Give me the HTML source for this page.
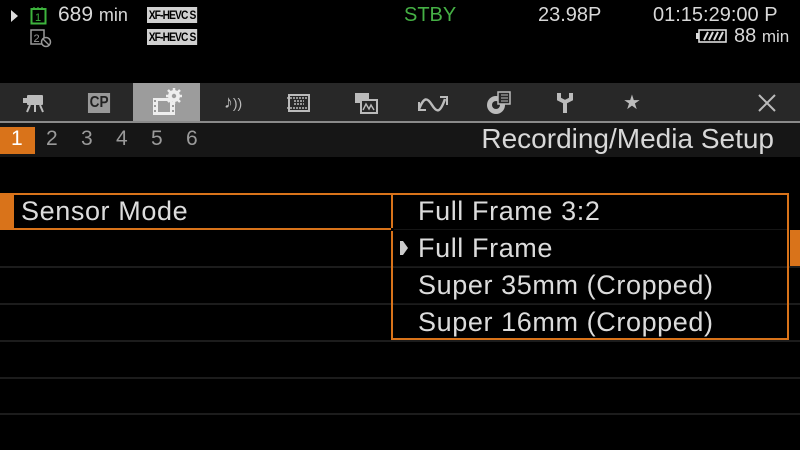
<!DOCTYPE html>
<html><head><meta charset="utf-8"><style>
*{margin:0;padding:0;box-sizing:border-box}
body{width:800px;height:450px;background:#000;overflow:hidden;position:relative;font-family:"Liberation Sans",sans-serif;color:#d8d8d8}
.a{position:absolute;white-space:nowrap}
.xf{position:absolute;background:#d0d0d0;color:#000;font-size:12px;font-weight:bold;letter-spacing:-1px;padding:0 2px;height:16px;line-height:16px;transform:scaleX(.85);transform-origin:left}
.line{position:absolute;left:0;width:800px;height:2px;background:#1c1c1c}
.it{position:absolute;font-size:27px;color:#dcdcdc;line-height:30px;letter-spacing:0.6px}
.tab{position:absolute;top:83px;height:39px;display:flex;align-items:center;justify-content:center;width:66px}
.pn{position:absolute;top:127px;font-size:21px;color:#9a9a9a}
</style></head><body>
<svg class="a" style="left:10px;top:9px" width="10" height="14"><polygon points="1,1 8,7 1,13" fill="#ddd"/></svg>
<svg class="a" style="left:30px;top:6px" width="18" height="19"><rect x="1.5" y="3" width="14" height="14.5" fill="none" stroke="#3db33d" stroke-width="2"/><path d="M4 1v3M8 1v3M12 1v3" stroke="#3db33d" stroke-width="1.2"/><text x="5" y="15" font-size="11" fill="#3db33d" font-family="Liberation Sans">1</text></svg>
<div class="a" style="left:58px;top:3px;font-size:21px;color:#d8d8d8">689 <span style="font-size:18px">min</span></div>
<div class="xf" style="left:147px;top:7px">XF-HEVC S</div>
<div class="xf" style="left:147px;top:29px">XF-HEVC S</div>
<svg class="a" style="left:30px;top:28px" width="24" height="20"><rect x="1" y="2" width="13" height="14" fill="none" stroke="#999" stroke-width="1.5"/><text x="3.5" y="14" font-size="11" fill="#999" font-family="Liberation Sans">2</text><circle cx="16" cy="14" r="4.5" fill="#000" stroke="#999" stroke-width="1.5"/><path d="M13 11l6 6" stroke="#999" stroke-width="1.3"/></svg>
<div class="a" style="left:404px;top:4px;font-size:20px;color:#45b045">STBY</div>
<div class="a" style="left:538px;top:4px;font-size:20px">23.98P</div>
<div class="a" style="left:653px;top:4px;font-size:20px">01:15:29:00 P</div>
<svg class="a" style="left:696px;top:28px" width="32" height="16"><rect x="3" y="2" width="27" height="12" fill="none" stroke="#ddd" stroke-width="1.6"/><rect x="0" y="5" width="3" height="6" fill="#ddd"/><path d="M8 12l4-8M13 12l4-8M18 12l4-8M23 12l4-8" stroke="#ddd" stroke-width="2"/></svg>
<div class="a" style="left:734px;top:25px;font-size:20px">88 <span style="font-size:17px">min</span></div>
<div class="a" style="left:0;top:83px;width:800px;height:39px;background:#282828"></div>
<div class="a" style="left:133px;top:83px;width:67px;height:39px;background:#9c9c9c"></div>
<div class="a" style="left:0;top:121px;width:800px;height:2px;background:#8a8a8a"></div>
<div class="tab" style="left:2px"><svg width="26" height="22"><rect x="1" y="6" width="4" height="5" fill="#bbb"/><rect x="5" y="3" width="16" height="10" rx="1" fill="#bbb"/><path d="M8 13l-3 7M13 13v7M18 13l3 7" stroke="#bbb" stroke-width="2"/></svg></div>
<div class="tab" style="left:66px"><div style="background:#999;color:#222;font-weight:bold;font-size:16px;padding:1px 2px;transform:scaleX(.85)">CP</div></div>
<div class="tab" style="left:133px"><svg width="34" height="30"><rect x="4" y="10" width="22" height="17" fill="#eee"/><rect x="9" y="13" width="12" height="11" fill="#9c9c9c"/><g fill="#9c9c9c"><rect x="5" y="12" width="2" height="2"/><rect x="5" y="17" width="2" height="2"/><rect x="5" y="22" width="2" height="2"/><rect x="23" y="12" width="2" height="2"/><rect x="23" y="17" width="2" height="2"/><rect x="23" y="22" width="2" height="2"/></g><circle cx="25" cy="8" r="6" fill="#eee"/><path d="M25 0v16M17 8h16M19 2l12 12M31 2l-12 12" stroke="#eee" stroke-width="2.5"/><circle cx="25" cy="8" r="2.2" fill="#9c9c9c"/></svg></div>
<div class="tab" style="left:200px"><div style="color:#bbb;font-size:18px">♪<span style="font-size:14px">))</span></div></div>
<div class="tab" style="left:266px"><svg width="26" height="22"><rect x="3" y="3" width="20" height="16" fill="none" stroke="#bbb" stroke-width="2"/><path d="M1 6h24M1 16h24M8 9h10M8 12h10" stroke="#bbb" stroke-width="1.5" stroke-dasharray="2 1"/></svg></div>
<div class="tab" style="left:333px"><svg width="26" height="24"><rect x="2" y="2" width="14" height="10" fill="#bbb"/><rect x="8" y="9" width="16" height="13" fill="#282828" stroke="#bbb" stroke-width="2"/><path d="M10 19l3-6 3 5 2-4 3 5" stroke="#bbb" stroke-width="1.4" fill="none"/></svg></div>
<div class="tab" style="left:400px"><svg width="32" height="20"><path d="M2 16c5-12 8-12 13-4s8 8 13-6" stroke="#bbb" stroke-width="2.5" fill="none"/><path d="M2 9v8h7M30 12V4h-7" stroke="#bbb" stroke-width="2" fill="none"/></svg></div>
<div class="tab" style="left:466px"><svg width="26" height="24"><circle cx="10" cy="14" r="9" fill="#bbb"/><circle cx="10" cy="14" r="4" fill="#282828"/><rect x="12" y="1" width="12" height="12" fill="#282828" stroke="#bbb" stroke-width="1.5"/><path d="M15 4h7M15 7h7M15 10h7" stroke="#bbb"/></svg></div>
<div class="tab" style="left:532px"><svg width="20" height="24"><path d="M4 2v6l6 3 6-3V2M10 11v11" stroke="#bbb" stroke-width="4" fill="none"/></svg></div>
<div class="tab" style="left:599px"><div style="color:#bbb;font-size:20px">★</div></div>
<div class="tab" style="left:734px"><svg width="20" height="20"><path d="M2 2l16 16M18 2L2 18" stroke="#bbb" stroke-width="2"/></svg></div>
<div class="a" style="left:0;top:123px;width:800px;height:34px;background:#161616"></div>
<div class="a" style="left:0;top:127px;width:35px;height:27px;background:#d9731a"></div>
<div class="a" style="left:11px;top:127px;font-size:21px;color:#fff">1</div>
<div class="pn" style="left:46px">2</div>
<div class="pn" style="left:81px">3</div>
<div class="pn" style="left:116px">4</div>
<div class="pn" style="left:151px">5</div>
<div class="pn" style="left:186px">6</div>
<div class="a" style="right:26px;top:123px;font-size:28px;color:#d8d8d8">Recording/Media Setup</div>
<div class="line" style="top:266px"></div>
<div class="line" style="top:303px"></div>
<div class="line" style="top:340px"></div>
<div class="line" style="top:377px"></div>
<div class="line" style="top:413px"></div>
<div class="a" style="left:0;top:193px;width:13px;height:37px;background:#d9731a"></div>
<div class="a" style="left:12px;top:193px;width:382px;height:37px;border:2px solid #d9731a;border-right:none"></div>
<div class="a" style="left:391px;top:193px;width:398px;height:147px;border:2px solid #d9731a"></div>
<div class="a" style="left:391px;top:228px;width:3px;height:3px;background:#000"></div>
<div class="a" style="left:394px;top:229px;width:393px;height:1px;background:#151515"></div>
<div class="a" style="left:394px;top:266px;width:393px;height:1px;background:#151515"></div>
<div class="a" style="left:394px;top:303px;width:393px;height:1px;background:#151515"></div>
<div class="a" style="left:790px;top:230px;width:10px;height:36px;background:#d9731a"></div>
<div class="it" style="left:21px;top:196px">Sensor Mode</div>
<div class="it" style="left:418px;top:196px">Full Frame 3:2</div>
<svg class="a" style="left:399px;top:240px" width="10" height="16"><path d="M1 1h3l5 7-5 7H1z" fill="#ccc"/></svg>
<div class="it" style="left:418px;top:233px">Full Frame</div>
<div class="it" style="left:418px;top:270px">Super 35mm (Cropped)</div>
<div class="it" style="left:418px;top:307px">Super 16mm (Cropped)</div>
</body></html>
